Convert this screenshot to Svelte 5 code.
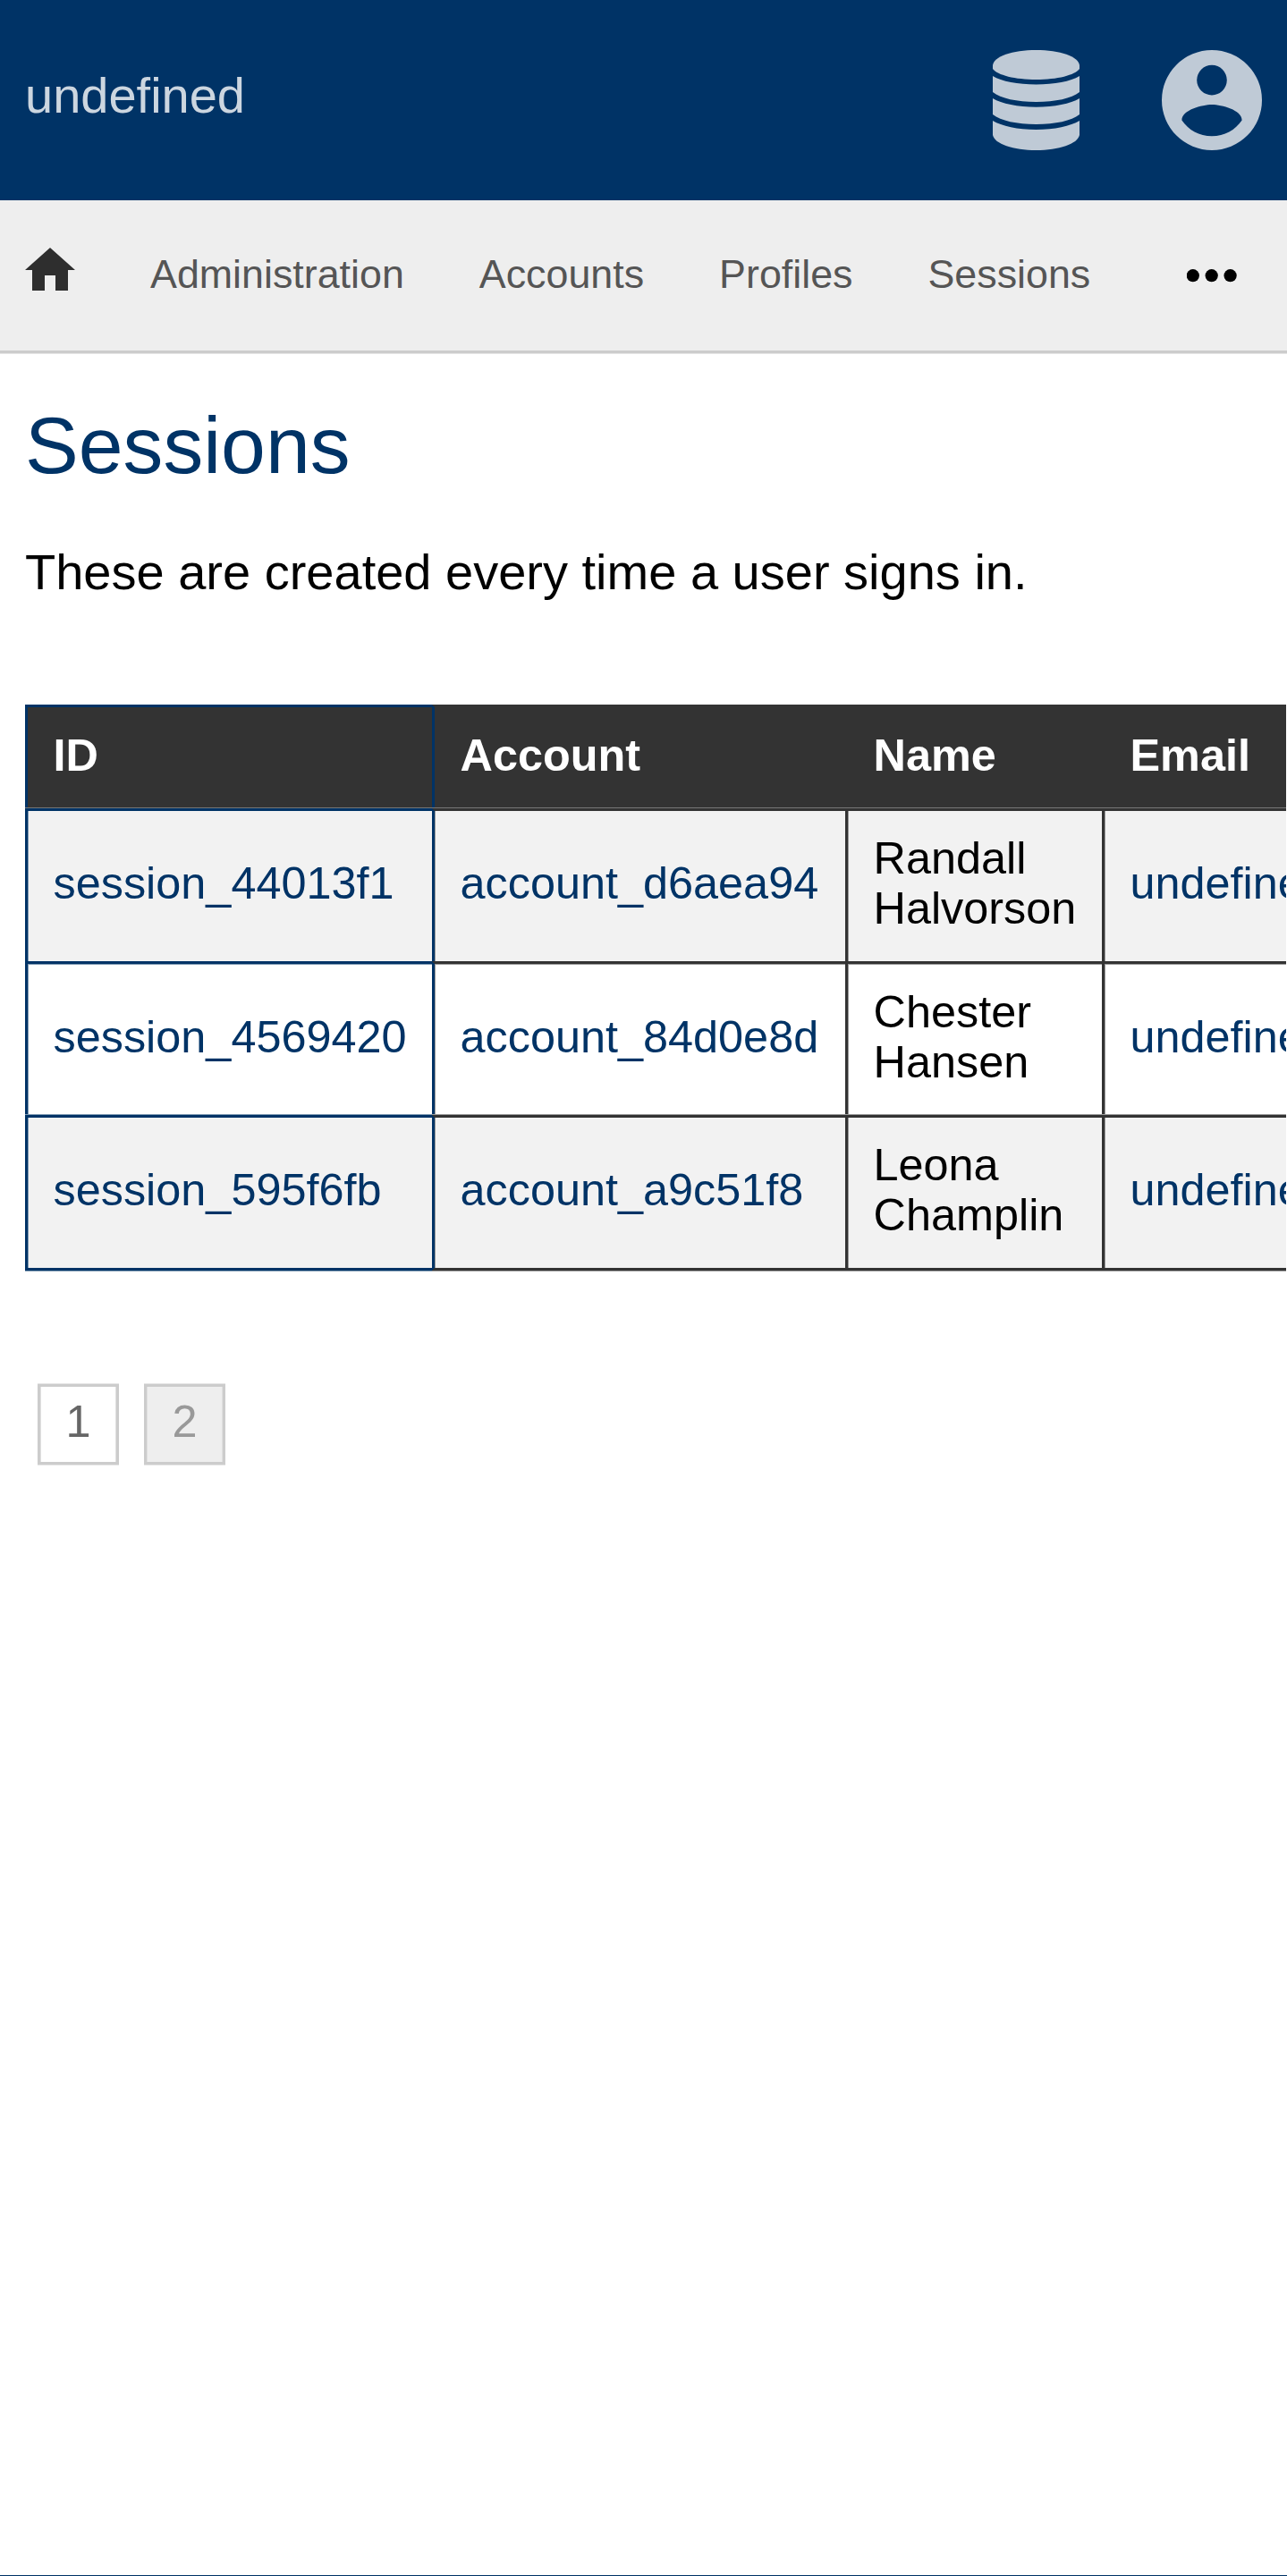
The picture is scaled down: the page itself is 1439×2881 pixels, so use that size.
<script>
  const links = ['Administration', 'Accounts', 'Profiles', 'Sessions'];
  const columns = ['ID', 'Account', 'Name', 'Email'];
  const sessions = [
    { id: 'session_44013f1', account: 'account_d6aea94', name: 'Randall Halvorson', email: 'undefined' },
    { id: 'session_4569420', account: 'account_84d0e8d', name: 'Chester Hansen', email: 'undefined' },
    { id: 'session_595f6fb', account: 'account_a9c51f8', name: 'Leona Champlin', email: 'undefined' }
  ];
</script>

<div class="page">
  <header class="top">
    <span class="brand">undefined</span>
    <div class="tools">
      <svg class="database" viewBox="0 0 97 112" aria-hidden="true">
        <path d="M0 17C1 7 22 0 48.500 0S96 7 97 17V21C92 28 72 33 48.500 33S5 28 0 21Z" />
        <path d="M0 29C10 35 28 38.500 48.500 38.500S87 35 97 29V47C88 54 70 58 48.500 58S9 54 0 47Z" />
        <path d="M0 54C10 60 28 63.700 48.500 63.700S87 60 97 54V72C88 79 70 83 48.500 83S9 79 0 72Z" />
        <path d="M0 79C10 85 28 89 48.500 89S87 85 97 79V95C95 105 74 112 48.500 112S2 105 0 95Z" />
      </svg>
      <svg class="account" viewBox="0 0 112 112" aria-hidden="true">
        <path
          fill-rule="evenodd"
          d="M56 0a56 56 0 1 0 0 112A56 56 0 0 0 56 0ZM56 16.800a16.800 16.800 0 1 1 0 33.600 16.800 16.800 0 0 1 0-33.600ZM56 96.300C42 96.300 29.600 89.200 22.400 78.400C22.600 67.200 44.800 61.100 56 61.100C67.200 61.100 89.400 67.200 89.600 78.400C82.400 89.200 70 96.300 56 96.300Z"
        />
      </svg>
    </div>
  </header>

  <nav class="menu">
    <svg class="home" viewBox="0 0 56 48" aria-hidden="true">
      <path d="M28 0L56 25H48V48H34V31H22V48H8V25H0Z" />
    </svg>
    {#each links as link}
      <span class="link">{link}</span>
    {/each}
    <svg class="more" viewBox="0 0 56 15" aria-hidden="true">
      <circle cx="6.800" cy="7.200" r="7.100" />
      <circle cx="27.700" cy="7.200" r="7.100" />
      <circle cx="48.600" cy="7.200" r="7.100" />
    </svg>
  </nav>

  <main>
    <h1>Sessions</h1>
    <p>These are created every time a user signs in.</p>

    <div class="scroller">
      <div class="table">
        <div class="row head">
          {#each columns as column}
            <div class="cell">{column}</div>
          {/each}
        </div>
        {#each sessions as session}
          <div class="row">
            <div class="cell linked">{session.id}</div>
            <div class="cell linked">{session.account}</div>
            <div class="cell">{session.name}</div>
            <div class="cell linked">{session.email}</div>
          </div>
        {/each}
      </div>
    </div>

    <div class="pager">
      <span class="number current">1</span>
      <span class="number">2</span>
    </div>
  </main>

  <footer></footer>
</div>

<style>
  .page {
    display: flex;
    flex-direction: column;
    width: 1439px;
    height: 2881px;
    overflow: hidden;
    background: #fff;
    color: #000;
    font-family: 'Liberation Sans', Arial, sans-serif;
  }
  .top {
    display: flex;
    justify-content: space-between;
    height: 224px;
    padding: 0 28px;
    box-sizing: border-box;
    background: #036;
  }
  .brand {
    padding-top: 75px;
    font-size: 56px;
    line-height: 63px;
    color: #ccd6e0;
  }
  .tools {
    display: flex;
    align-items: center;
    gap: 92px;
    fill: #bfcad6;
  }
  .database {
    width: 97px;
    height: 112px;
  }
  .account {
    width: 112px;
    height: 112px;
  }
  .menu {
    display: flex;
    height: 168px;
    padding-left: 28px;
    border-bottom: 3px solid #ccc;
    box-shadow: 0 1px 0 #e5e5e5;
    background: #eee;
    font-size: 44.8px;
    color: #555;
  }
  .home {
    width: 56px;
    height: 48px;
    margin: 53px 42px 0 0;
    fill: #2e2e2e;
  }
  .link {
    padding: 0 42px;
    line-height: 165px;
  }
  .more {
    width: 56px;
    height: 15px;
    margin: 77px 0 0 66px;
  }
  h1 {
    margin: 52px 28px 0;
    font-size: 89.6px;
    line-height: 102px;
    font-weight: 400;
    color: #036;
  }
  p {
    margin: 59px 28px 0;
    font-size: 56px;
    line-height: 63px;
  }
  .scroller {
    width: 1410px;
    margin: 117px 0 0 28px;
    overflow: hidden;
  }
  .table {
    width: 1700px;
    padding-bottom: 1px;
    font-size: 50.4px;
    line-height: 56px;
  }
  .row {
    display: grid;
    grid-template-columns: 455px 462px 287px 496px;
    height: 171px;
    background: #f2f2f2;
  }
  .row:nth-child(3) {
    height: 172px;
    background: #fff;
  }
  .row.head {
    height: 116px;
    background: #333;
    color: #fff;
    font-weight: 700;
  }
  .cell {
    --line: #333;
    --edge: #999;
    --top-edge: var(--edge);
    display: flex;
    align-items: center;
    padding: 0 28px 6px 28.5px;
    border: solid var(--line);
    border-width: 3px 0 0 3px;
    box-shadow: inset 1px 0 0 var(--edge), 0 -1px 0 var(--top-edge);
  }
  .row:nth-child(2) .cell {
    --top-edge: #777;
  }
  .row:nth-child(3) .cell {
    box-shadow: inset 1px 1px 0 var(--edge);
  }
  .row.head .cell {
    padding-bottom: 5px;
    box-shadow: none;
  }
  .cell:first-child {
    --line: #036;
    --edge: #7f99b2;
  }
  .cell:nth-child(2) {
    border-left-color: #036;
  }
  .row:last-child {
    height: 174px;
  }
  .row:last-child .cell {
    border-bottom: 3px solid var(--line);
    box-shadow: inset 1px 0 0 var(--edge), 0 -1px 0 var(--edge), 0 1px 0 var(--edge);
  }
  .linked {
    color: #036;
  }
  .pager {
    display: flex;
    gap: 28px;
    margin: 126px 0 0 42px;
  }
  .number {
    width: 85px;
    height: 84px;
    border: 3px solid #ccc;
    box-shadow: 0 -1px 0 #e5e5e5, 0 1px 0 #e5e5e5, inset 1px 0 0 #e0e0e0, inset -1px 0 0 #e0e0e0;
    background: #eee;
    color: #999;
    font-size: 50.4px;
    line-height: 77px;
    text-align: center;
  }
  .current {
    background: #fff;
    color: #666;
  }
  footer {
    height: 1px;
    margin-top: auto;
    background: #036;
  }
</style>
